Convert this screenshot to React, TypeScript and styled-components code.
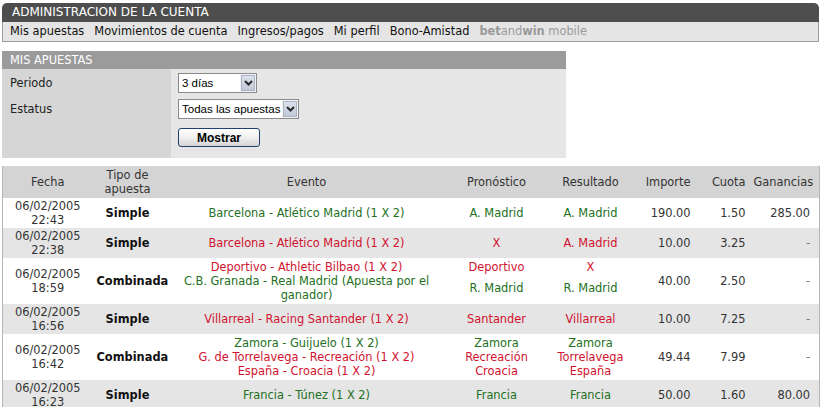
import styled, { createGlobalStyle } from 'styled-components';

const GlobalStyle = createGlobalStyle`
  body {
    margin: 0;
    background: #fff;
    font-family: "DejaVu Sans", Verdana, sans-serif;
    font-size: 11.4px;
    color: #222;
  }
`;

const GREEN = '#237023';
const RED = '#d0122e';

const Page = styled.div`
  width: 817px;
  padding: 3px 2px 0;
`;

const TitleBar = styled.div`
  height: 19px;
  line-height: 19px;
  padding-left: 10px;
  background: #4e4e4e;
  color: #fff;
  font-size: 12px;
  border-radius: 5px 5px 0 0;
`;

const Nav = styled.nav`
  display: flex;
  gap: 10px;
  height: 19px;
  line-height: 19px;
  padding: 0 7px;
  background: #e5e5e5;
  border: 1px solid #9d9d9d;
  border-top: none;
`;

const NavLink = styled.a`
  color: #111;
  text-decoration: none;
`;

const Mobile = styled.span`
  color: #9a9a9a;
  b {
    font-weight: bold;
  }
`;

const Section = styled.section`
  width: 564px;
  margin-top: 9px;
`;

const SectionHeader = styled.div`
  height: 18px;
  line-height: 18px;
  padding-left: 8px;
  background: #9b9b9b;
  color: #fff;
`;

const FormBody = styled.div`
  display: flex;
`;

const LabelCol = styled.div`
  width: 169px;
  box-sizing: border-box;
  padding: 4px 8px;
  background: #d6d6d6;
  display: flex;
  flex-direction: column;
  gap: 6px;
`;

const Label = styled.div`
  height: 20px;
  line-height: 20px;
  color: #222;
`;

const FieldCol = styled.div`
  flex: 1;
  padding: 4px 7px 11px;
  background: #e6e6e6;
  display: flex;
  flex-direction: column;
  align-items: flex-start;
  gap: 6px;
`;

const SelectBox = styled.div<{ $width: number }>`
  width: ${({ $width }) => $width}px;
  height: 20px;
  box-sizing: border-box;
  display: flex;
  border: 1px solid #8a8a8a;
  background: #fff;
  font-family: "Liberation Sans", Arial, sans-serif;
  font-size: 11.5px;
  color: #000;
`;

const SelectValue = styled.span`
  flex: 1;
  line-height: 18px;
  padding-left: 3px;
  white-space: nowrap;
  overflow: hidden;
`;

const SelectArrow = styled.span`
  width: 16px;
  box-sizing: border-box;
  display: flex;
  align-items: center;
  justify-content: center;
  border: 1px solid #f2f4f8;
  outline: 1px solid #aab3c4;
  outline-offset: -2px;
  background: linear-gradient(#dde2ec, #bfc7d6);
`;

const Button = styled.button`
  margin-top: 3px;
  width: 82px;
  height: 19px;
  padding: 0;
  border: 1px solid #22406e;
  border-radius: 3px;
  background: linear-gradient(#ffffff, #eeeeee 55%, #d4d4d4);
  font-family: "Liberation Sans", Arial, sans-serif;
  font-size: 12px;
  font-weight: bold;
  color: #000;
`;

const Table = styled.table`
  margin-top: 8px;
  width: 817px;
  table-layout: fixed;
  border-collapse: collapse;
  border-left: 1px solid #b5b5b5;
  border-right: 1px solid #b5b5b5;
  line-height: 14px;
`;

const Th = styled.th<{ $align?: string }>`
  height: 28px;
  padding: 2px 4px;
  background: #d4d4d4;
  font-weight: normal;
  color: #333;
  text-align: ${({ $align }) => $align || 'center'};
`;

const Body = styled.tbody<{ $alt: boolean }>`
  background: ${({ $alt }) => ($alt ? '#e5e5e5' : '#fff')};
`;

const Td = styled.td<{ $align?: string; $color?: string; $bold?: boolean }>`
  padding: 1px 4px;
  vertical-align: middle;
  text-align: ${({ $align }) => $align || 'center'};
  color: ${({ $color }) => $color || '#333'};
  font-weight: ${({ $bold }) => ($bold ? 'bold' : 'normal')};
`;

/* cells of one pick inside a bet: lines sit tight, only the bet has outer padding */
const PickTd = styled(Td)<{ $first: boolean; $last: boolean }>`
  padding-top: ${({ $first }) => ($first ? 2 : 0)}px;
  padding-bottom: ${({ $last }) => ($last ? 2 : 0)}px;
`;

const LastTd = styled(Td)`
  padding-right: 9px;
`;

const LastTh = styled(Th)`
  padding-right: 9px;
`;

type Pick = { event: string; pick: string; result: string; won: boolean };

type Bet = {
  date: string;
  time: string;
  type: string;
  picks: Pick[];
  stake: string;
  odds: string;
  win: string;
};

const bets: Bet[] = [
  {
    date: '06/02/2005', time: '22:43', type: 'Simple',
    picks: [{ event: 'Barcelona - Atlético Madrid (1 X 2)', pick: 'A. Madrid', result: 'A. Madrid', won: true }],
    stake: '190.00', odds: '1.50', win: '285.00',
  },
  {
    date: '06/02/2005', time: '22:38', type: 'Simple',
    picks: [{ event: 'Barcelona - Atlético Madrid (1 X 2)', pick: 'X', result: 'A. Madrid', won: false }],
    stake: '10.00', odds: '3.25', win: '-',
  },
  {
    date: '06/02/2005', time: '18:59', type: 'Combinada',
    picks: [
      { event: 'Deportivo - Athletic Bilbao (1 X 2)', pick: 'Deportivo', result: 'X', won: false },
      { event: 'C.B. Granada - Real Madrid (Apuesta por el ganador)', pick: 'R. Madrid', result: 'R. Madrid', won: true },
    ],
    stake: '40.00', odds: '2.50', win: '-',
  },
  {
    date: '06/02/2005', time: '16:56', type: 'Simple',
    picks: [{ event: 'Villarreal - Racing Santander (1 X 2)', pick: 'Santander', result: 'Villarreal', won: false }],
    stake: '10.00', odds: '7.25', win: '-',
  },
  {
    date: '06/02/2005', time: '16:42', type: 'Combinada',
    picks: [
      { event: 'Zamora - Guijuelo (1 X 2)', pick: 'Zamora', result: 'Zamora', won: true },
      { event: 'G. de Torrelavega - Recreación (1 X 2)', pick: 'Recreación', result: 'Torrelavega', won: false },
      { event: 'España - Croacia (1 X 2)', pick: 'Croacia', result: 'España', won: false },
    ],
    stake: '49.44', odds: '7.99', win: '-',
  },
  {
    date: '06/02/2005', time: '16:23', type: 'Simple',
    picks: [{ event: 'Francia - Túnez (1 X 2)', pick: 'Francia', result: 'Francia', won: true }],
    stake: '50.00', odds: '1.60', win: '80.00',
  },
];

const Chevron = () => (
  <svg width="9" height="6" viewBox="0 0 9 6">
    <polyline points="1,1 4.5,4.5 8,1" fill="none" stroke="#2a2a2a" strokeWidth="2" />
  </svg>
);

const Select = ({ value, width }: { value: string; width: number }) => (
  <SelectBox $width={width}>
    <SelectValue>{value}</SelectValue>
    <SelectArrow>
      <Chevron />
    </SelectArrow>
  </SelectBox>
);

const BetRows = ({ bet, alt }: { bet: Bet; alt: boolean }) => {
  const span = bet.picks.length;
  return (
    <Body $alt={alt}>
      {bet.picks.map((p, i) => {
        const color = p.won ? GREEN : RED;
        const first = i === 0;
        const last = i === span - 1;
        return (
          <tr key={i}>
            {first && (
              <>
                <Td rowSpan={span}>
                  {bet.date}
                  <br />
                  {bet.time}
                </Td>
                <Td rowSpan={span} $bold $color="#111">
                  {bet.type}
                </Td>
              </>
            )}
            <PickTd $first={first} $last={last} $color={color}>{p.event}</PickTd>
            <PickTd $first={first} $last={last} $color={color}>{p.pick}</PickTd>
            <PickTd $first={first} $last={last} $color={color}>{p.result}</PickTd>
            {first && (
              <>
                <Td rowSpan={span} $align="right">{bet.stake}</Td>
                <Td rowSpan={span} $align="right">{bet.odds}</Td>
                <LastTd rowSpan={span} $align="right" $color={bet.win === '-' ? '#777' : '#333'}>
                  {bet.win}
                </LastTd>
              </>
            )}
          </tr>
        );
      })}
    </Body>
  );
};

export default function App() {
  return (
    <Page>
      <GlobalStyle />
      <TitleBar>ADMINISTRACION DE LA CUENTA</TitleBar>
      <Nav>
        <NavLink href="#">Mis apuestas</NavLink>
        <NavLink href="#">Movimientos de cuenta</NavLink>
        <NavLink href="#">Ingresos/pagos</NavLink>
        <NavLink href="#">Mi perfil</NavLink>
        <NavLink href="#">Bono-Amistad</NavLink>
        <Mobile>
          <b>bet</b>and<b>win</b> mobile
        </Mobile>
      </Nav>

      <Section>
        <SectionHeader>MIS APUESTAS</SectionHeader>
        <FormBody>
          <LabelCol>
            <Label>Periodo</Label>
            <Label>Estatus</Label>
          </LabelCol>
          <FieldCol>
            <Select value="3 días" width={79} />
            <Select value="Todas las apuestas" width={121} />
            <Button>Mostrar</Button>
          </FieldCol>
        </FormBody>
      </Section>

      <Table>
        <colgroup>
          <col style={{ width: 90 }} />
          <col style={{ width: 70 }} />
          <col style={{ width: 288 }} />
          <col style={{ width: 92 }} />
          <col style={{ width: 96 }} />
          <col style={{ width: 56 }} />
          <col style={{ width: 55 }} />
          <col style={{ width: 70 }} />
        </colgroup>
        <thead>
          <tr>
            <Th>Fecha</Th>
            <Th>Tipo de apuesta</Th>
            <Th>Evento</Th>
            <Th>Pronóstico</Th>
            <Th>Resultado</Th>
            <Th $align="right">Importe</Th>
            <Th $align="right">Cuota</Th>
            <LastTh $align="right">Ganancias</LastTh>
          </tr>
        </thead>
        {bets.map((b, i) => (
          <BetRows key={i} bet={b} alt={i % 2 === 1} />
        ))}
      </Table>
    </Page>
  );
}
